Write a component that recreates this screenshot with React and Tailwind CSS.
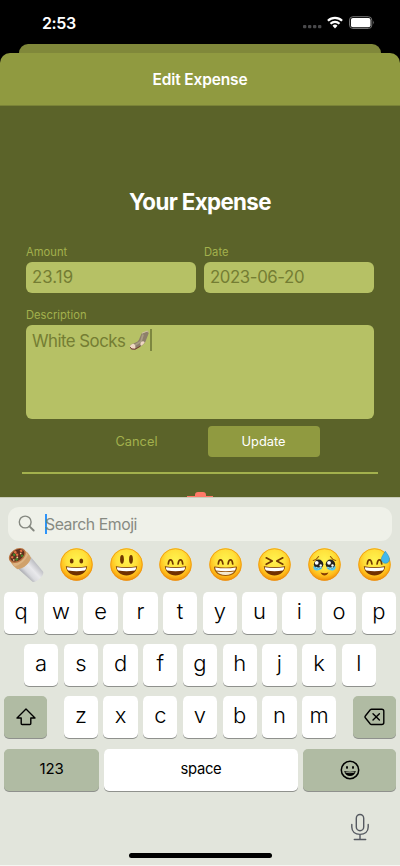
import React from "react";

function StatusBar() {
  return (
    <div className="flex h-11 items-start justify-between bg-black pl-[42px] pr-[25px] text-white">
      <span className="mt-[13px] text-[16px] font-semibold leading-5 tracking-[-0.4px]">2:53</span>
      <svg className="mt-4" width="73" height="14" viewBox="302 16 73 14">
        <g fill="#49494b">
          <rect x="303" y="25" width="3.4" height="3.2" rx="1" />
          <rect x="308" y="25" width="3.4" height="3.2" rx="1" />
          <rect x="313" y="25" width="3.4" height="3.2" rx="1" />
          <rect x="318" y="25" width="3.4" height="3.2" rx="1" />
        </g>
        <g fill="none" stroke="#fff" strokeWidth="2.2">
          <path d="M327.9 20.7a10.2 10.2 0 0 1 14.2 0" />
          <path d="M330.5 23.7a6.4 6.4 0 0 1 9 0" />
        </g>
        <path d="M335 28.4l-2.5-2.6a3.6 3.6 0 0 1 5 0z" fill="#fff" />
        <rect x="349.5" y="16.7" width="22.3" height="11.8" rx="3.4" fill="none" stroke="#747474" />
        <rect x="350.9" y="18" width="19.6" height="9.2" rx="2" fill="#fff" />
        <path d="M373 20.6q1.6 1.9 0 3.8z" fill="#747474" />
      </svg>
    </div>
  );
}

function Sock() {
  return (
    <svg className="ml-[4px]" width="21" height="21" viewBox="0 0 21 21">
      <path d="M12.6 3.5L18 1.2c1.500.2 2 1.100 1.500 2.600L16.700 11c-.7 2-2.300 3.700-4.600 5l-5.200 3.200c-3 1.300-5.300.600-5.900-1.400-.4-2 .8-3.500 2.900-4l3.900-1.900c1.600-.9 2.300-2.300 2.800-4z" fill="#8d7f6a" />
      <path d="M14 4.500L12 11.400l-6.200 3.900" fill="none" stroke="#a99b84" strokeWidth="1.800" />
      <path d="M13 3.200l5-2c1 .1 1.400.6 1.300 1.300" fill="none" stroke="#d3c1a9" strokeWidth="1" />
      <path d="M1 16.200c.4-1.700 1.900-2.400 3.800-2.500 1.700 1.100 2 3.100 1.300 5.200-2.900.9-5.200-.3-5.100-2.700z" fill="#efd8c3" />
      <path d="M1 17.200q1.300 2.500 5 2l5.400-3" fill="none" stroke="#733c2b" strokeWidth="1" />
      <path d="M11.800 12.600c1.300-1.400 2.700-1.700 3.900-.4-.7 1.500-1.900 2.600-3.400 3.500-1.100-.5-1.200-1.700-.5-3.100z" fill="#efd8c3" />
    </svg>
  );
}

function Field({ label, value, spacing }) {
  return (
    <div className="flex-1">
      <div className="h-[15.5px] text-[11.2px] leading-[12px] tracking-[0.02px] text-[#a3b14d]">{label}</div>
      <div className={`flex h-[31.5px] items-center rounded-[6px] bg-[#b6c165] pl-[6px] pt-px text-[16.8px] text-[#747d33] ${spacing}`}>{value}</div>
    </div>
  );
}

function ExpenseForm() {
  return (
    <main className="h-[391px] bg-[#5b6329] px-[26px] pt-[82px]">
      <h1 className="text-center text-[22.3px] font-bold leading-7 tracking-[-0.62px] text-white">Your Expense</h1>
      <div className="mt-[30px] flex gap-2">
        <Field label="Amount" value="23.19" spacing="tracking-[0.05px]" />
        <Field label="Date" value="2023-06-20" spacing="tracking-[-0.4px]" />
      </div>
      <div className="mt-4 h-4 text-[11.2px] leading-[12px] text-[#a3b14d]">Description</div>
      <div className="flex h-[94px] items-start rounded-[6px] bg-[#b6c165] pl-[6px] pt-[5px] text-[16.8px] leading-[21px] tracking-[-0.5px] text-[#747d33]">
        <span className="pt-px">White Socks</span>
        <Sock />
        <span className="mt-[-1px] h-[22px] w-[1.5px] bg-[#7d8740]" />
      </div>
      <div className="mt-[7px] flex justify-center gap-[15px] text-[12.8px] text-[#a3b14d]">
        <button className="h-[31px] w-[112px]">Cancel</button>
        <button className="h-[31px] w-[112px] rounded-[4px] bg-[#909a40] text-white">Update</button>
      </div>
      <div className="mx-[-4px] mt-[15px] h-[2px] bg-[#a3b14d]" />
      <div className="mt-[18px] flex flex-col items-center">
        <div className="h-[4px] w-[11px] rounded-t-[3px] bg-[#ff7968]" />
        <div className="h-[1px] w-[26px] bg-[#ff7968]" />
      </div>
    </main>
  );
}

function Burrito() {
  return (
    <svg width="36" height="36" viewBox="0 0 36 36">
      <defs>
        <linearGradient id="foil" gradientUnits="userSpaceOnUse" x1="16" y1="29" x2="29" y2="17">
          <stop stopColor="#a1a2a8" />
          <stop offset=".3" stopColor="#d9dade" />
          <stop offset=".6" stopColor="#e9e9ec" />
          <stop offset="1" stopColor="#bcbdc2" />
        </linearGradient>
      </defs>
      <path d="M9 20.800Q19 18 22.500 9.500L35 24.500c2 3.500-6.500 11.300-10.500 10.300z" fill="url(#foil)" />
      <path d="M1.300 10.500L15 2.500c3.500 1.500 6.500 4.500 8 8.500-2 6-7 10.500-13.500 11.300C5.500 19.500 2 15.500 1.300 10.500z" fill="#d0a16b" />
      <path d="M4.700 16.700Q14 14 18.300 5.500l2 2.300Q16 16.500 6.800 19.500z" fill="#dcb382" />
      <ellipse cx="9.300" cy="8.500" rx="9.300" ry="6.500" transform="rotate(-36 9.300 8.500)" fill="#b87443" />
      <ellipse cx="9.300" cy="8.300" rx="7.800" ry="5.200" transform="rotate(-36 9.300 8.300)" fill="#60301e" />
      <path d="M3.300 10l2 .5m1-6l2 1.500m4-3l1.700 1.800m-6 2.700l2.200.3" stroke="#e57346" strokeWidth="2.200" />
      <path d="M5.200 7.200l2 1m.5 5l2-1.700m3.500-3.300l1.600 1.200" stroke="#418e2e" strokeWidth="2.200" />
      <path d="M8.500 10.500l1.600-.3m2-4l1.200.7m-8 5.500l1 1" stroke="#f5d39a" strokeWidth="1.400" />
    </svg>
  );
}

function Teeth() {
  return (
    <g>
      <path d="M5.800 18.300q10.700 1.800 21.400 0c-.8 6-5 9.200-10.700 9.200s-9.900-3.200-10.700-9.200z" fill="#713000" />
      <path d="M6.800 19.200q9.700 1.600 19.400 0c-.2 1.700-.6 2.600-1.500 3.300q-8.200 1.500-16.400 0c-.9-.7-1.300-1.600-1.500-3.300z" fill="#fff" />
    </g>
  );
}

function Face({ kind }) {
  const brown = "#713800";
  return (
    <svg width="33" height="33" viewBox="0 0 33 33">
      <defs>
        <radialGradient id={`skin-${kind}`} cx=".5" cy=".36" r=".64">
          <stop stopColor="#fff34f" />
          <stop offset=".48" stopColor="#ffe13b" />
          <stop offset=".78" stopColor="#ffbd1b" />
          <stop offset="1" stopColor="#f08a08" />
        </radialGradient>
      </defs>
      <circle cx="16.5" cy="16.5" r="16.2" fill={`url(#skin-${kind})`} />
      <circle cx="16.5" cy="16.5" r="15.8" fill="none" stroke="#ed920f" strokeWidth=".7" />
      {kind === "grin" && (
        <g>
          <ellipse cx="11.7" cy="13" rx="1.9" ry="2.5" fill={brown} />
          <ellipse cx="21.3" cy="13" rx="1.9" ry="2.5" fill={brown} />
          <Teeth />
        </g>
      )}
      {kind === "happy" && (
        <g>
          <ellipse cx="12" cy="11.3" rx="1.9" ry="4.4" fill={brown} />
          <ellipse cx="21" cy="11.3" rx="1.9" ry="4.4" fill={brown} />
          <Teeth />
        </g>
      )}
      {(kind === "smile" || kind === "beam" || kind === "sweat") && (
        <path d="M9.300 16c.5-5.600 3.900-5.600 4.600 0M19.100 16c.7-5.600 4.100-5.600 4.600 0" fill="none" stroke={brown} strokeWidth="1.7" strokeLinecap="round" />
      )}
      {(kind === "smile" || kind === "sweat") && <Teeth />}
      {kind === "beam" && (
        <g>
          <path d="M6 18.500q10.500 1.800 21 0c1 0 1.200.6 1 1.500-.8 5-5.100 8-11.500 8S5.800 25 5 20c-.1-.9.1-1.500 1-1.500z" fill="#9a570b" />
          <path d="M6.200 19.500q10.300 1.700 20.600 0-.1 1.600-.9 3.100-9.400 1.400-18.800 0-.8-1.500-.9-3.100z" fill="#fff" />
          <path d="M7.700 23.500q8.800 1.200 17.600 0c-1.800 2.300-4.700 3.500-8.800 3.500s-7-1.200-8.800-3.500z" fill="#f5ead0" />
        </g>
      )}
      {kind === "laugh" && (
        <g>
          <path d="M8.200 9.800l6 3.200-6 3.300M24.800 9.800l-6 3.200 6 3.300" fill="none" stroke={brown} strokeWidth="1.7" strokeLinecap="round" strokeLinejoin="round" />
          <Teeth />
        </g>
      )}
      {kind === "tears" && (
        <g>
          <path d="M5.300 12.500q3.400-.8 5.300-4M27.700 12.500q-3.400-.8-5.300-4" fill="none" stroke="#9b5a08" strokeWidth="1.1" strokeLinecap="round" />
          <path d="M5.800 17.500q-1.500 4 2.200 5 3 .5 6.500-2zM27.200 17.500q1.500 4-2.200 5-3 .5-6.500-2z" fill="#53c9f4" />
          <circle cx="10.6" cy="16.3" r="4.7" fill="#24221e" />
          <circle cx="22.4" cy="16.3" r="4.7" fill="#24221e" />
          <circle cx="8.7" cy="14.8" r="1.9" fill="#fff" />
          <circle cx="21" cy="14.8" r="1.9" fill="#fff" />
          <circle cx="12.7" cy="17.5" r="1.2" fill="#fff" />
          <circle cx="24.5" cy="17.5" r="1.2" fill="#fff" />
          <path d="M7.500 19.200q3 2 6 0M19.300 19.200q3 2 6 0" fill="none" stroke="#88dff7" strokeWidth="1.5" />
          <path d="M12.500 24.600q4 1.200 8 0c-1.800 3.800-6.200 3.800-8 0z" fill="#853c04" />
        </g>
      )}
      {kind === "sweat" && <path d="M27.300 3.200c2.500 3.400 4.100 5.600 4.100 7.900 0 2.700-1.600 4.200-4 4.200s-4-1.700-4-4.200c0-2.300 2.200-4.900 3.900-7.900z" fill="#42b8ed" stroke="#1588ca" strokeWidth=".5" />}
    </svg>
  );
}

function Key({ children }) {
  return (
    <div className="flex h-[42px] w-[34.3px] justify-center rounded-[5px] bg-white text-[22px] font-[350] leading-[38px] text-black shadow-[0_1px_0_#8f918d]">
      {children}
    </div>
  );
}

const grayKey = "flex h-[42px] items-center justify-center rounded-[5px] bg-[#b0bba3] text-black shadow-[0_1px_0_#8f918d]";

function Keyboard() {
  return (
    <section className="h-[369px] border-b border-t border-b-[#f5f6f2] border-t-[#c9ccba] bg-[#e2e5dc] pt-[9px]">
      <div className="mx-2 flex h-[34px] items-center rounded-[11px] bg-[#eff1e9] pl-[10px] text-[#878a82]">
        <svg width="18" height="18" viewBox="0 0 18 18" fill="none" stroke="#858880" strokeWidth="1.4" strokeLinecap="round">
          <circle cx="7.2" cy="7" r="5.9" />
          <path d="M11.500 11.300l4.200 4.200" strokeWidth="1.9" />
        </svg>
        <span className="ml-[9px] h-5 w-[2px] bg-[#2d94fa]" />
        <span className="ml-[-2px] pt-px text-[15.8px] tracking-[-0.45px]">Search Emoji</span>
      </div>
      <div className="flex h-[47px] items-center pl-2">
        <Burrito />
        <div className="ml-4 flex gap-[16.6px]">
          <Face kind="grin" />
          <Face kind="happy" />
          <Face kind="smile" />
          <Face kind="beam" />
          <Face kind="laugh" />
          <Face kind="tears" />
          <Face kind="sweat" />
        </div>
      </div>
      <div className="mt-[3.7px] flex flex-col gap-[10.3px] px-1">
        <div className="flex justify-between">
          {"qwertyuiop".split("").map((letter) => <Key key={letter}>{letter}</Key>)}
        </div>
        <div className="flex justify-between px-5">
          {"asdfghjkl".split("").map((letter) => <Key key={letter}>{letter}</Key>)}
        </div>
        <div className="flex justify-between">
          <div className={`${grayKey} w-[43px]`}>
            <svg width="20" height="18" viewBox="0 0 20 18" fill="none" stroke="#000" strokeWidth="1.4" strokeLinejoin="round">
              <path d="M10 1L1 10h4.200v5.600q0 .9.900.9h7.800q.9 0 .9-.9V10H19z" />
            </svg>
          </div>
          <div className="flex gap-[5.4px]">
            {"zxcvbnm".split("").map((letter) => <Key key={letter}>{letter}</Key>)}
          </div>
          <div className={`${grayKey} w-[43px]`}>
            <svg width="21" height="18" viewBox="0 0 21 18" fill="none" stroke="#000" strokeWidth="1.4" strokeLinecap="round" strokeLinejoin="round">
              <path d="M7.500 1.300h10.300q2 0 2 2v11.200q0 2-2 2H7.500q-.7 0-1.200-.5L1.500 10q-1-1.100 0-2.200l4.800-6q.5-.5 1.200-.5z" />
              <path d="M9 5.700l6.400 6.400m0-6.400L9 12.100" />
            </svg>
          </div>
        </div>
        <div className="flex gap-[5px]">
          <div className={`${grayKey} w-[95px] text-[15px] tracking-[-0.1px]`}>123</div>
          <div className="flex h-[42px] flex-1 justify-center rounded-[5px] bg-white text-[14.8px] leading-[40px] tracking-[-0.3px] text-black shadow-[0_1px_0_#8f918d]">space</div>
          <div className={`${grayKey} w-[93px]`}>
            <svg width="20" height="20" viewBox="0 0 20 20">
              <circle cx="10" cy="10" r="8.7" fill="none" stroke="#000" strokeWidth="1.5" />
              <ellipse cx="7" cy="7.5" rx="1" ry="1.4" />
              <ellipse cx="13" cy="7.5" rx="1" ry="1.4" />
              <path d="M4.200 11q5.800 1.500 11.600 0c-.8 3.500-2.800 5-5.800 5s-5-1.500-5.800-5z" />
              <path d="M5.600 12.300q4.400.8 8.800 0" stroke="#b0bba3" strokeWidth=".8" fill="none" />
            </svg>
          </div>
        </div>
      </div>
      <div className="mt-[22.3px] flex justify-end pr-[30px]">
        <svg width="20" height="28" viewBox="0 0 20 28" fill="none" stroke="#555960" strokeWidth="1.4" strokeLinecap="round">
          <rect x="6.3" y="1.5" width="7.4" height="16.2" rx="3.7" />
          <path d="M1.800 11.500v2.600c0 4.700 3.400 7.300 8.200 7.300s8.200-2.600 8.200-7.300v-2.600M10 21.400v5M4.300 26.500h11.400" />
        </svg>
      </div>
      <div className="mx-auto mt-[12px] h-[5px] w-[143px] rounded-full bg-black" />
    </section>
  );
}

export default function App() {
  return (
    <div className="h-[866px] w-[400px] overflow-hidden bg-black font-['Inter',sans-serif]">
      <StatusBar />
      <div className="mx-[19px] h-[9px] rounded-t-[9px] bg-[#80883a]" />
      <header className="flex h-[53px] items-center justify-center rounded-t-[10px] border-b border-[#7a8337] bg-[#909a40] pt-[2px] text-[15.5px] font-semibold tracking-[-0.15px] text-white">Edit Expense</header>
      <ExpenseForm />
      <Keyboard />
    </div>
  );
}
